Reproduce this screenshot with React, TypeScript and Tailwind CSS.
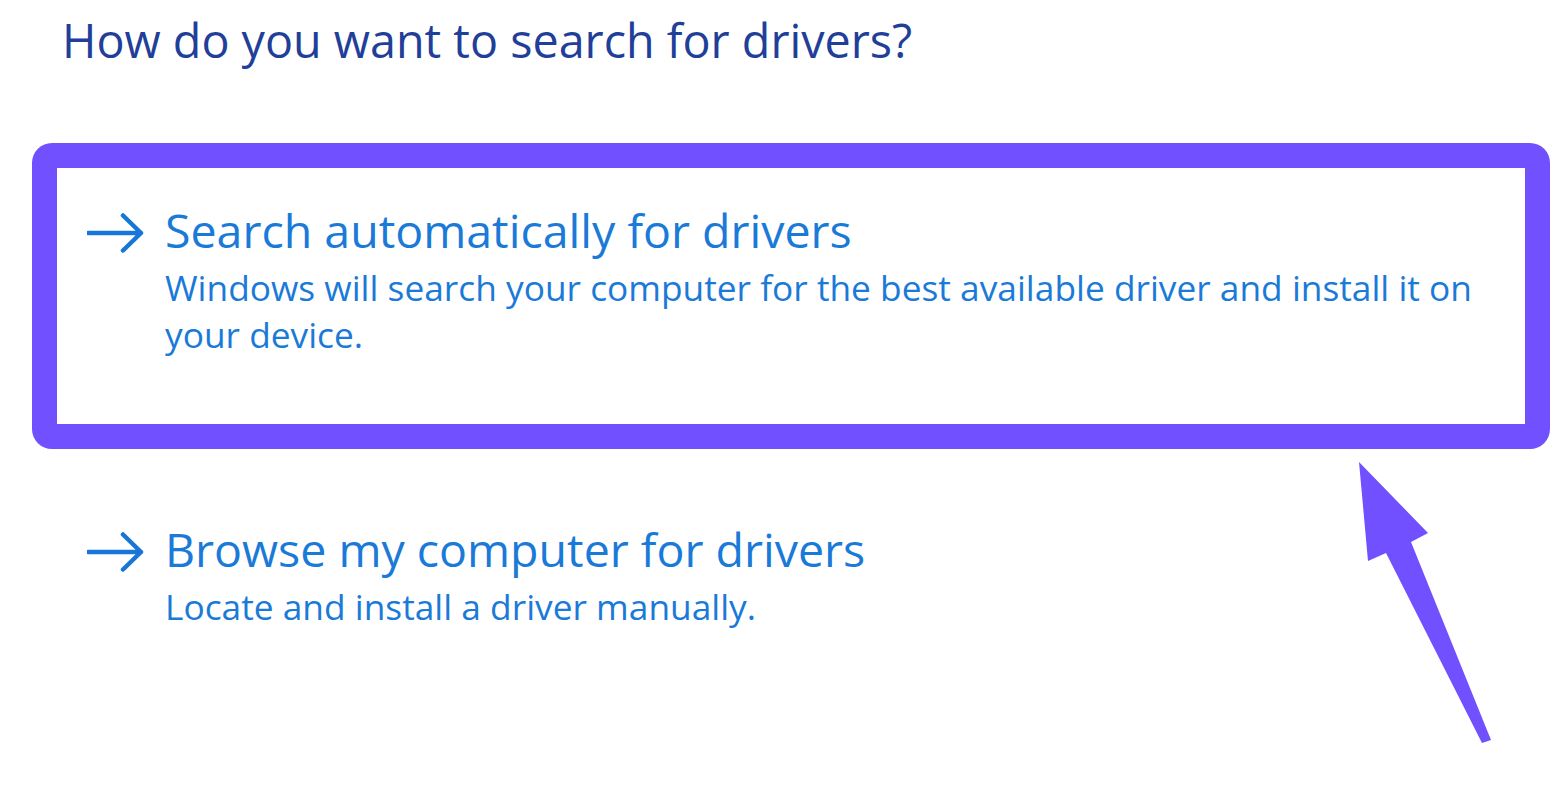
import React from "react";

const ArrowGlyph: React.FC = () => (
  <svg width="58" height="40" viewBox="0 0 58 40" fill="none" className="shrink-0">
    <path d="M1 20 H54 M36 2.5 L54 20 L36 37.5" stroke="#1877d6" strokeWidth="4.5" strokeLinecap="round" strokeLinejoin="round" />
  </svg>
);

type OptionProps = {
  title: string;
  desc: string;
};

const Option: React.FC<OptionProps> = ({ title, desc }) => (
  <div className="flex gap-[20px]">
    <div className="pt-[12px]">
      <ArrowGlyph />
    </div>
    <div className="flex flex-col">
      <span className="text-[46.5px] leading-[58px] text-[#1a7ad8]">{title}</span>
      <span className="mt-[5px] text-[35.3px] leading-[47px] text-[#1a7ad8]">{desc}</span>
    </div>
  </div>
);

export default function App() {
  return (
    <div
      className="relative w-[1558px] h-[807px] bg-white overflow-hidden"
      style={{ fontFamily: '"Open Sans", "Noto Sans", sans-serif' }}
    >
      <div className="flex flex-col pl-[32px] pt-[10px]">
        <h1 className="pl-[30px] text-[46.7px] leading-[60px] text-[#1f3f99]">
          How do you want to search for drivers?
        </h1>
        <div className="mt-[73px] w-[1518px] h-[306px] border-[25px] border-[#7050ff] rounded-[20px] pl-[30px] pt-[33px] pr-[40px]">
          <Option
            title="Search automatically for drivers"
            desc="Windows will search your computer for the best available driver and install it on your device."
          />
        </div>
        <div className="mt-[71px] pl-[55px]">
          <Option title="Browse my computer for drivers" desc="Locate and install a driver manually." />
        </div>
      </div>
      <svg className="absolute left-0 top-0" width="1558" height="807" viewBox="0 0 1558 807">
        <polygon
          points="1359,462 1428,533 1411,542 1491,740 1482,743 1386,553 1368,561"
          fill="#7050ff"
        />
      </svg>
    </div>
  );
}
